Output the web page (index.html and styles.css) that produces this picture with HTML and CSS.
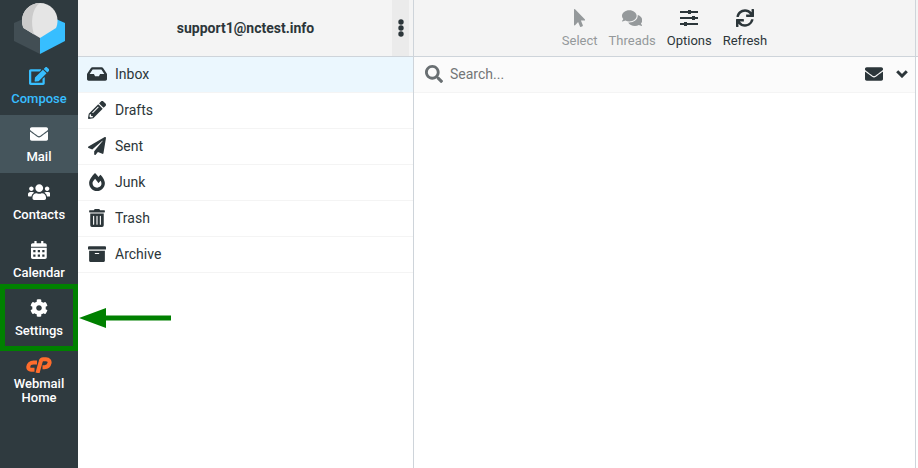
FILE: index.html
```html
<!DOCTYPE html>
<html lang="en">
<head>
  <meta charset="UTF-8">
  <meta name="viewport" content="width=device-width, initial-scale=1.0">
  <title>Webmail</title>
  <link rel="stylesheet" href="styles.css">
</head>
<body>
  <div class="layout">
    <nav class="taskbar">
      <svg class="logo" viewBox="0 0 52 57" aria-hidden="true">
        <path fill="#424e54" d="M1 23L10 19 27 30V54L1 41z"/>
        <path fill="#37beff" d="M52 23L43 19 27 30V54L52 41z"/>
        <path fill="#e5e5e5" d="M27 3C17 3 9 11 9 20.500C9 23 9.500 26 10.500 28L27 38L43 28C44 26 44.500 23 44.500 20.500C44.500 11 37 3 27 3z"/>
        <path fill="#cbcbcb" d="M27 3C17 3 9 11 9 20.500C9 23 9.500 26 10.500 28L21 34.400C17.500 23 18.500 9 27 3z"/>
      </svg>
      <a class="task compose" href="#compose">
        <svg class="icon" viewBox="0 0 576 512"><path d="M402.600 83.200l90.200 90.200c3.800 3.800 3.800 10 0 13.800L274.400 405.600l-92.800 10.300c-12.400 1.400-22.900-9.100-21.500-21.500l10.300-92.800L388.800 83.200c3.800-3.800 10-3.800 13.800 0zm162-22.900l-48.800-48.800c-15.200-15.200-39.900-15.200-55.200 0l-35.400 35.400c-3.800 3.800-3.800 10 0 13.800l90.200 90.200c3.800 3.800 10 3.800 13.800 0l35.400-35.400c15.200-15.300 15.200-40 0-55.200zM384 346.200V448H64V128h229.800c3.200 0 6.200-1.300 8.500-3.500l40-40c7.600-7.600 2.200-20.500-8.500-20.500H48C21.500 64 0 85.500 0 112v352c0 26.500 21.500 48 48 48h352c26.500 0 48-21.500 48-48V306.200c0-10.700-12.900-16-20.500-8.500l-40 40c-2.200 2.300-3.500 5.300-3.500 8.500z"/></svg>
        <span>Compose</span>
      </a>
      <a class="task selected" href="#mail">
        <svg class="icon" viewBox="0 0 512 512"><path d="M502.300 190.800c3.900-3.100 9.700-.2 9.700 4.700V400c0 26.500-21.500 48-48 48H48c-26.500 0-48-21.500-48-48V195.600c0-5 5.700-7.800 9.700-4.700 22.400 17.400 52.100 39.500 154.100 113.600 21.100 15.400 56.700 47.800 92.200 47.600 35.700.3 72-32.800 92.300-47.600 102-74.100 131.600-96.300 154-113.700zM256 320c23.200.4 56.600-29.200 73.400-41.400 132.700-96.300 142.800-104.700 173.400-128.700 5.800-4.500 9.200-11.500 9.200-18.900v-19c0-26.500-21.500-48-48-48H48c-26.500 0-48 21.500-48 48v19c0 7.400 3.400 14.300 9.200 18.900 30.600 23.900 40.700 32.400 173.400 128.700 16.800 12.200 50.200 41.800 73.400 41.400z"/></svg>
        <span>Mail</span>
      </a>
      <a class="task" href="#contacts">
        <svg class="icon" viewBox="0 0 640 512"><path d="M96 224c35.300 0 64-28.700 64-64s-28.700-64-64-64-64 28.700-64 64 28.700 64 64 64zm448 0c35.300 0 64-28.700 64-64s-28.700-64-64-64-64 28.700-64 64 28.700 64 64 64zm32 32h-64c-17.600 0-33.500 7.100-45.100 18.600 40.300 22.100 68.900 62 75.100 109.400h66c17.700 0 32-14.300 32-32v-32c0-35.300-28.700-64-64-64zm-256 0c61.900 0 112-50.100 112-112S381.900 32 320 32 208 82.100 208 144s50.100 112 112 112zm76.800 32h-8.300c-20.800 10-43.900 16-68.500 16s-47.600-6-68.500-16h-8.300C179.600 288 128 339.600 128 403.200V432c0 26.500 21.500 48 48 48h288c26.500 0 48-21.500 48-48v-28.800c0-63.600-51.600-115.200-115.200-115.200zm-223.700-13.400C161.500 263.100 145.600 256 128 256H64c-35.300 0-64 28.700-64 64v32c0 17.700 14.300 32 32 32h65.900c6.300-47.400 34.900-87.300 75.200-109.400z"/></svg>
        <span>Contacts</span>
      </a>
      <a class="task" href="#calendar">
        <svg class="icon" viewBox="0 0 448 512"><path fill-rule="evenodd" d="M0 160v-48c0-26 22-48 48-48h48V12c0-7 5-12 12-12h40c7 0 12 5 12 12v52h128V12c0-7 5-12 12-12h40c7 0 12 5 12 12v52h48c26 0 48 22 48 48v48zM0 192h448v272c0 26-22 48-48 48H48c-26 0-48-22-48-48zM64 256v64h64v-64zM192 256v64h64v-64zM320 256v64h64v-64zM64 384v64h64v-64zM192 384v64h64v-64zM320 384v64h64v-64z"/></svg>
        <span>Calendar</span>
      </a>
      <a class="task highlighted" href="#settings">
        <svg class="icon" viewBox="0 0 512 512"><path d="M487.400 315.700l-42.600-24.600c4.300-23.200 4.300-47 0-70.200l42.600-24.600c4.900-2.800 7.100-8.600 5.500-14-11.100-35.600-30-67.800-54.700-94.600-3.800-4.100-10-5.100-14.800-2.300L380.800 110c-17.900-15.400-38.500-27.300-60.800-35.100V25.800c0-5.600-3.900-10.500-9.400-11.700-36.700-8.200-74.300-7.800-109.200 0-5.500 1.200-9.400 6.100-9.400 11.700V75c-22.200 7.900-42.800 19.800-60.800 35.100L88.700 85.500c-4.900-2.800-11-1.900-14.800 2.300-24.700 26.700-43.600 58.900-54.700 94.600-1.700 5.400.6 11.200 5.500 14L67.300 221c-4.300 23.200-4.300 47 0 70.200l-42.600 24.600c-4.900 2.800-7.100 8.600-5.500 14 11.100 35.600 30 67.800 54.700 94.600 3.800 4.100 10 5.100 14.800 2.300l42.600-24.600c17.900 15.400 38.500 27.300 60.800 35.100v49.200c0 5.600 3.900 10.500 9.400 11.700 36.700 8.200 74.300 7.800 109.200 0 5.500-1.200 9.400-6.100 9.400-11.700v-49.200c22.200-7.900 42.800-19.800 60.800-35.100l42.600 24.600c4.900 2.800 11 1.900 14.800-2.300 24.700-26.700 43.600-58.900 54.700-94.600 1.500-5.500-.7-11.300-5.600-14.100zM256 336c-44.100 0-80-35.900-80-80s35.900-80 80-80 80 35.900 80 80-35.900 80-80 80z"/></svg>
        <span>Settings</span>
        <svg class="arrow" viewBox="0 0 92 20" aria-hidden="true"><path fill="#008000" d="M0 10L27 0v7.500h65v5H27V20z"/></svg>
      </a>
      <a class="task webmail" href="#home">
        <svg class="cpanel" viewBox="0 0 26 16" aria-hidden="true">
          <path fill="none" stroke="#ff6c2c" stroke-width="4" d="M11 5.500H7.500C4.500 5.500 2.500 7.500 2.300 9.700C2.100 11.500 3.300 12.700 5 12.700H8.500M11.500 16L14.700 4.500C15 3.200 15.800 2.300 17.200 2.300H20C22.800 2.300 24 4 23.500 6.200C23 8.700 21.200 10.300 18.500 10.300H16.500"/>
        </svg>
        <span>Webmail Home</span>
      </a>
    </nav>

    <aside class="sidebar">
      <header class="header">
        <h1 class="account">support1@nctest.info</h1>
        <button class="menu" aria-label="Folder actions">
          <svg class="dots" viewBox="0 0 6 18"><circle cx="3" cy="3" r="2.700"/><circle cx="3" cy="9" r="2.700"/><circle cx="3" cy="15" r="2.700"/></svg>
        </button>
      </header>
      <ul class="folders">
        <li><a class="folder selected" href="#inbox">
          <svg class="icon" viewBox="0 0 576 512"><path d="M567.900 243.900L462.200 85.400A48 48 0 0 0 422.300 64H153.700a48 48 0 0 0-39.900 21.400L8.100 243.900A48 48 0 0 0 0 270.500V400c0 26.500 21.500 48 48 48h480c26.500 0 48-21.500 48-48V270.500a48 48 0 0 0-8.100-26.600zM162.300 128h251.400l85.400 128H376l-32 64H232l-32-64H76.900z"/></svg>
          <span>Inbox</span></a></li>
        <li><a class="folder" href="#drafts">
          <svg class="icon" viewBox="0 0 512 512"><path d="M497.900 142.100l-46.100 46.100c-4.700 4.700-12.300 4.700-17 0l-111-111c-4.700-4.700-4.700-12.300 0-17l46.100-46.100c18.700-18.700 49.100-18.700 67.900 0l60.100 60.100c18.800 18.700 18.800 49.100 0 67.900zM284.200 99.800L21.600 362.400.4 483.900c-2.900 16.400 11.400 30.600 27.800 27.800l121.500-21.300 262.600-262.600c4.700-4.700 4.700-12.300 0-17l-111-111c-4.800-4.700-12.400-4.700-17.100 0zM124.100 339.900c-5.500-5.500-5.500-14.300 0-19.800l154-154c5.500-5.500 14.300-5.500 19.800 0s5.500 14.300 0 19.800l-154 154c-5.500 5.500-14.300 5.500-19.800 0zM88 424h48v36.300l-64.500 11.300-31.100-31.100L51.700 376H88v48z"/></svg>
          <span>Drafts</span></a></li>
        <li><a class="folder" href="#sent">
          <svg class="icon" viewBox="0 0 512 512"><path d="M476 3.200L12.500 270.600c-18.100 10.400-15.800 35.600 2.200 43.200L121 358.400l287.300-253.200c5.500-4.900 13.300 2.600 8.600 8.300L176 407v80.500c0 23.600 28.500 32.900 42.500 15.800L282 426l124.600 52.200c14.200 6 30.400-2.900 33-18.200l72-432C515 7.800 493.300-6.800 476 3.200z"/></svg>
          <span>Sent</span></a></li>
        <li><a class="folder" href="#junk">
          <svg class="icon" viewBox="0 0 448 512"><path d="M323.600 51.200c-20.800 19.300-39.600 39.600-56.200 60C240.100 73.600 206.300 35.500 168 0 69.700 91.200 0 210 0 281.600 0 408.900 100.300 512 224 512s224-103.100 224-230.400c0-53.300-52-163.100-124.400-230.400zm-19.500 340.700C282.400 407 255.700 416 226.900 416 154.700 416 96 368.300 96 290.800c0-38.700 24.300-72.700 72.800-130.800 6.900 8 98.800 125.300 98.800 125.300l58.700-66.800c4.100 6.800 7.900 13.500 11.200 20 27.400 52.100 15.800 118.900-33.400 153.400z"/></svg>
          <span>Junk</span></a></li>
        <li><a class="folder" href="#trash">
          <svg class="icon" viewBox="0 0 448 512"><path d="M32 464a48 48 0 0 0 48 48h288a48 48 0 0 0 48-48V128H32zm272-256a16 16 0 0 1 32 0v224a16 16 0 0 1-32 0zm-96 0a16 16 0 0 1 32 0v224a16 16 0 0 1-32 0zm-96 0a16 16 0 0 1 32 0v224a16 16 0 0 1-32 0zM432 32H312l-9.400-18.700A24 24 0 0 0 281.100 0H166.800a23.700 23.700 0 0 0-21.400 13.300L136 32H16A16 16 0 0 0 0 48v32a16 16 0 0 0 16 16h416a16 16 0 0 0 16-16V48a16 16 0 0 0-16-16z"/></svg>
          <span>Trash</span></a></li>
        <li><a class="folder" href="#archive">
          <svg class="icon" viewBox="0 0 512 512"><path d="M32 448c0 17.700 14.300 32 32 32h384c17.700 0 32-14.300 32-32V160H32v288zm160-212c0-6.600 5.400-12 12-12h104c6.600 0 12 5.400 12 12v8c0 6.600-5.400 12-12 12H204c-6.600 0-12-5.400-12-12v-8zM480 32H32C14.300 32 0 46.300 0 64v48c0 8.800 7.200 16 16 16h480c8.800 0 16-7.200 16-16V64c0-17.700-14.300-32-32-32z"/></svg>
          <span>Archive</span></a></li>
      </ul>
    </aside>

    <main class="messages">
      <header class="header toolbar">
        <button class="tool" disabled>
          <svg class="icon" viewBox="0 0 320 512"><path d="M302.200 329.100H196.100l55.800 136c3.900 9.400-.5 20-9.400 24l-49.200 21.400c-9.100 4-19.400-.5-23.300-9.700l-53.100-129.100-86.600 89.100C18.700 472.700 0 463.600 0 448V18.300C0 1.900 19.900-6.100 30.300 5.400L314.700 298c11.500 11.200 3 31.100-12.500 31.100z"/></svg>
          <span>Select</span>
        </button>
        <button class="tool" disabled>
          <svg class="icon" viewBox="0 0 576 512"><path d="M416 192c0-88.400-93.100-160-208-160S0 103.600 0 192c0 34.300 14.100 65.900 38 92-13.400 30.200-35.500 54.200-35.800 54.500-2.200 2.300-2.800 5.700-1.500 8.700S4.800 352 8 352c36.600 0 66.900-12.300 88.700-25 32.200 15.700 70.300 25 111.300 25 114.900 0 208-71.600 208-160zm122 220c23.900-26 38-57.700 38-92 0-66.900-53.500-124.200-129.300-148.100.9 6.600 1.300 13.300 1.300 20.100 0 105.900-107.700 192-240 192-10.800 0-21.300-.8-31.700-1.900C207.800 439.600 281.800 480 368 480c41 0 79.100-9.200 111.300-25 21.800 12.700 52.100 25 88.700 25 3.200 0 6.100-1.900 7.300-4.800 1.300-2.900.7-6.300-1.500-8.700-.3-.3-22.400-24.200-35.800-54.500z"/></svg>
          <span>Threads</span>
        </button>
        <button class="tool">
          <svg class="icon" viewBox="0 0 18 18"><path d="M0 2h8V1h3v1h7v2h-7v1H8V4H0zM0 8h12V7h3v1h3v2h-3v1h-3v-1H0zM0 14h4v-1h3v1h11v2H7v1H4v-1H0z"/></svg>
          <span>Options</span>
        </button>
        <button class="tool">
          <svg class="icon" viewBox="0 0 512 512"><path d="M440.600 12.600l4 82.700A247.200 247.200 0 0 0 255.800 8C134.700 8 33.900 94.900 12.300 209.800A12 12 0 0 0 24.100 224h49a12 12 0 0 0 11.700-9.300 175.900 175.900 0 0 1 317-56.900l-101.500-4.900a12 12 0 0 0-12.500 12v47.400a12 12 0 0 0 12 12H500a12 12 0 0 0 12-12V12a12 12 0 0 0-12-12h-47.400a12 12 0 0 0-12 12.600zM255.800 432a175.600 175.600 0 0 1-146-77.800l101.800 4.900a12 12 0 0 0 12.600-12v-47.400a12 12 0 0 0-12-12H12a12 12 0 0 0-12 12V500a12 12 0 0 0 12 12h47.400a12 12 0 0 0 12-12.600l-4.200-82.600A247.200 247.200 0 0 0 255.800 504c121.100 0 221.900-86.900 243.600-201.800a12 12 0 0 0-11.800-14.200h-49.100a12 12 0 0 0-11.700 9.300A175.900 175.900 0 0 1 255.800 432z"/></svg>
          <span>Refresh</span>
        </button>
      </header>
      <form class="searchbar">
        <label class="search-label" for="search" aria-label="Search">
          <svg class="icon" viewBox="0 0 512 512"><path d="M505 442.700L405.300 343c-4.500-4.500-10.600-7-17-7H372c27.600-35.300 44-79.700 44-128C416 93.100 322.900 0 208 0S0 93.100 0 208s93.100 208 208 208c48.300 0 92.700-16.400 128-44v16.300c0 6.400 2.500 12.500 7 17l99.700 99.700c9.400 9.400 24.600 9.400 33.900 0l28.300-28.300c9.400-9.400 9.400-24.600.1-34zM208 336c-70.700 0-128-57.200-128-128 0-70.700 57.200-128 128-128 70.700 0 128 57.200 128 128 0 70.700-57.200 128-128 128z"/></svg>
        </label>
        <input class="search" id="search" type="text" placeholder="Search...">
        <button class="filter" type="button" aria-label="Show unread messages">
          <svg class="icon" viewBox="0 0 512 512"><path d="M502.300 190.800c3.900-3.100 9.700-.2 9.700 4.700V400c0 26.500-21.500 48-48 48H48c-26.500 0-48-21.500-48-48V195.600c0-5 5.700-7.800 9.700-4.700 22.400 17.400 52.100 39.500 154.100 113.600 21.100 15.400 56.700 47.800 92.200 47.600 35.700.3 72-32.800 92.300-47.600 102-74.100 131.600-96.300 154-113.700zM256 320c23.200.4 56.600-29.200 73.400-41.400 132.700-96.300 142.800-104.700 173.400-128.700 5.800-4.500 9.200-11.500 9.200-18.900v-19c0-26.500-21.500-48-48-48H48c-26.500 0-48 21.500-48 48v19c0 7.400 3.400 14.300 9.200 18.900 30.600 23.900 40.700 32.400 173.400 128.700 16.800 12.200 50.200 41.800 73.400 41.400z"/></svg>
        </button>
        <button class="filter" type="button" aria-label="Search options">
          <svg class="chevron" viewBox="0 0 12 8"><path fill="none" stroke="currentColor" stroke-width="3" d="M1.200 1.200L6 6l4.800-4.800"/></svg>
        </button>
      </form>
    </main>

    <section class="preview" aria-label="Message preview">
      <div class="header"></div>
    </section>
  </div>
</body>
</html>
```
FILE: styles.css
```css
* {
  box-sizing: border-box;
}

body {
  margin: 0;
  font-family: Roboto, sans-serif;
  font-size: 14px;
  color: #2c363a;
  background: #fff;
}

a {
  color: inherit;
  text-decoration: none;
}

button {
  padding: 0;
  border: none;
  background: none;
  font: inherit;
  color: inherit;
}

svg {
  display: block;
}

.icon {
  flex-shrink: 0;
  height: 18px;
  fill: currentColor;
}

.layout {
  display: flex;
  min-height: 100vh;
}

/* left taskbar */
.taskbar {
  flex: 0 0 78px;
  background: #2f3a3f;
  color: #fff;
}

.logo {
  width: 52px;
  height: 57px;
  margin: 0 auto;
}

.task {
  position: relative;
  display: flex;
  flex-direction: column;
  align-items: center;
  gap: 4px;
  padding: 10px 8px 0;
  height: 58px;
  font-size: 13px;
  font-weight: 500;
  line-height: 20px;
  text-align: center;
}

.task.compose {
  color: #37beff;
}

.task.selected {
  background: #45555c;
}

.task.highlighted::after {
  content: "";
  position: absolute;
  inset: -5px 0 -4px;
  border: 5px solid #008000;
}

.arrow {
  position: absolute;
  left: 79px;
  top: 19px;
  width: 92px;
  height: 20px;
}

.task.webmail {
  height: auto;
  line-height: 14px;
}

.cpanel {
  width: 26px;
  height: 16px;
}

/* shared top bar */
.header {
  display: flex;
  height: 57px;
  background: #f4f4f4;
  border-bottom: 1px solid #ced4da;
}

/* folder list */
.sidebar {
  flex: 0 0 336px;
  border-right: 1px solid #ced4da;
}

.account {
  flex: 1;
  margin: 0;
  padding-left: 21px;
  font-size: 14px;
  font-weight: 700;
  line-height: 56px;
  text-align: center;
}

.menu {
  display: flex;
  align-items: center;
  justify-content: center;
  width: 17px;
  margin-right: 4px;
  background: #ebebeb;
}

.dots {
  width: 6px;
  height: 18px;
  fill: currentColor;
}

.folders {
  margin: 0;
  padding: 0;
  list-style: none;
}

.folder {
  display: flex;
  align-items: center;
  gap: 8px;
  height: 36px;
  padding: 0 9px 1px;
  border-bottom: 1px solid #f4f4f4;
}

.folder .icon {
  width: 20px;
}

.folder.selected {
  background: #ebf7fe;
}

/* message list */
.messages {
  flex: 1;
  min-width: 0;
  border-right: 1px solid #ced4da;
}

.toolbar {
  justify-content: center;
  gap: 11px;
}

.tool {
  display: flex;
  flex-direction: column;
  align-items: center;
  gap: 5px;
  padding-top: 9px;
  font-size: 13px;
  line-height: 18px;
}

.tool:disabled {
  color: #95999b;
}

.searchbar {
  display: flex;
  align-items: center;
  height: 36px;
  padding: 0 7px 1px 11px;
  background: #fbfbfb;
  border-bottom: 1px solid #f4f4f4;
}

.search-label {
  color: #696f72;
}

.search {
  flex: 1;
  min-width: 0;
  padding: 0 7px;
  border: none;
  outline: none;
  background: none;
  font: inherit;
}

.search::placeholder {
  color: #737677;
}

.filter {
  padding-left: 13px;
}

.chevron {
  width: 12px;
  height: 8px;
}

.preview {
  flex: 0 0 2px;
}
```
